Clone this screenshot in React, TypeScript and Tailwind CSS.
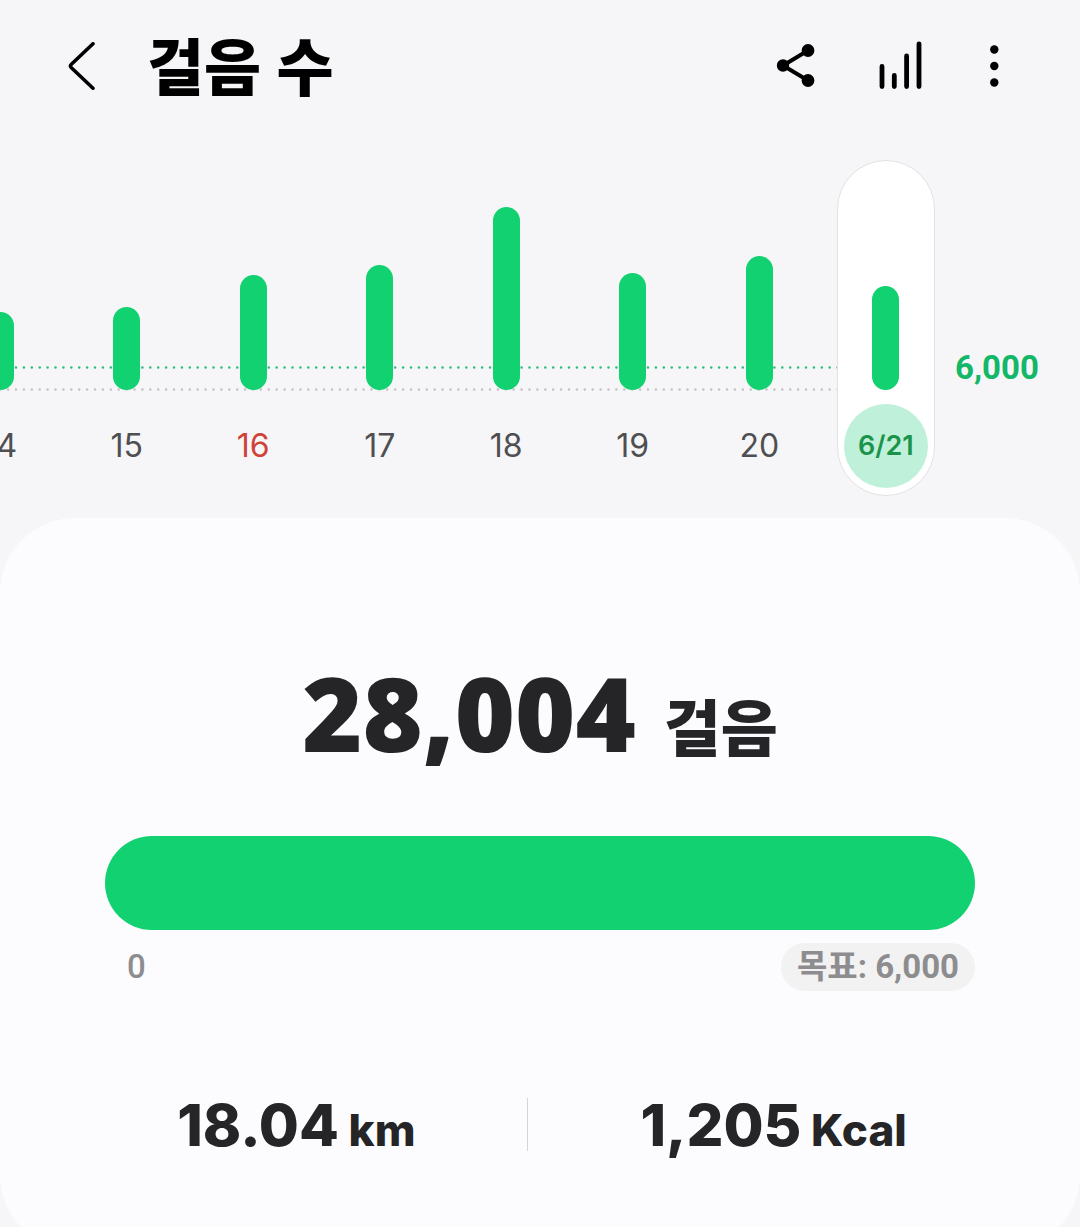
import React from 'react';

interface Day {
  label: string;
  height: number;
  holiday?: boolean;
  selected?: boolean;
}

const days: Day[] = [
  { label: '14', height: 78 },
  { label: '15', height: 83 },
  { label: '16', height: 115, holiday: true },
  { label: '17', height: 125 },
  { label: '18', height: 183 },
  { label: '19', height: 117 },
  { label: '20', height: 134 },
  { label: '6/21', height: 104, selected: true },
];

const Header: React.FC = () => (
  <header className="flex h-[132px] items-center pl-[58px] pr-[62px]">
    <button type="button" aria-label="뒤로" className="size-12 shrink-0">
      <svg viewBox="0 0 48 48" className="size-12" fill="none" stroke="#000" strokeWidth="3.6" strokeLinecap="round" strokeLinejoin="round">
        <path d="M35 1.8 13.4 22.2Q11.6 24 13.4 25.8L35 46.2" />
      </svg>
    </button>
    <h1 className="ml-[41px] flex-1 pt-2 text-[62px] leading-[72px] font-black text-black">걸음 수</h1>
    <div className="flex items-center">
      <button type="button" aria-label="공유" className="size-12">
        <svg viewBox="0 0 48 48" className="size-12" stroke="#000" strokeWidth="4">
          <path d="M36 8.5 11 23.5 36 38.5" fill="none" />
          <circle cx="36" cy="8.5" r="4.4" />
          <circle cx="11" cy="23.5" r="4.2" />
          <circle cx="36" cy="38.5" r="4.4" />
        </svg>
      </button>
      <button type="button" aria-label="통계" className="ml-14 size-12">
        <svg viewBox="0 0 48 48" className="size-12 overflow-visible" fill="none" stroke="#000" strokeWidth="4.8" strokeLinecap="round">
          <path d="M6 24.4v20.2M18.3 33.4v11.2M30.6 14v30.6M43 1.8v42.8" />
        </svg>
      </button>
      <button type="button" aria-label="더보기" className="ml-[46px] size-12">
        <svg viewBox="0 0 48 48" className="size-12">
          <circle cx="24.3" cy="7.5" r="4.2" />
          <circle cx="24.3" cy="24" r="4.2" />
          <circle cx="24.3" cy="40.5" r="4.2" />
        </svg>
      </button>
    </div>
  </header>
);

const DayColumn: React.FC<{ day: Day }> = ({ day }) => (
  <button
    type="button"
    aria-pressed={Boolean(day.selected)}
    className={`relative flex h-[336px] w-[98px] flex-col items-center justify-end rounded-full border pb-[7px] ${
      day.selected ? 'border-[#e2e2e4] bg-white' : 'border-transparent'
    }`}
  >
    <span className="w-[27px] rounded-full bg-[#12d170]" style={{ height: day.height }} />
    <span
      className={`mt-3.5 flex size-21 items-center justify-center rounded-full font-['Inter',sans-serif] ${
        day.selected
          ? 'bg-[#bff0d9] text-[27px] font-semibold text-[#1b934b]'
          : day.holiday
            ? 'text-[32px] text-[#cf4339]'
            : 'text-[32px] text-[#4f4f51]'
      }`}
    >
      {day.label}
    </span>
  </button>
);

const StepsChart: React.FC = () => (
  <section className="mt-7 flex overflow-hidden">
    <div className="relative -ml-[63px] grid flex-1 grid-cols-8 justify-items-center">
      <svg className="absolute inset-0 h-full w-full" fill="none" strokeWidth="2.6" strokeLinecap="round" strokeDasharray="0 7.9">
        <line x1="0" y1="207.5" x2="93%" y2="207.5" stroke="#2fbd7c" />
        <line x1="0" y1="229.5" x2="93%" y2="229.5" stroke="#c3c3c5" />
      </svg>
      {days.map((day) => (
        <DayColumn key={day.label} day={day} />
      ))}
    </div>
    <div className="w-[131px] shrink-0 pt-[188px] pl-1.5 text-[33px] leading-10 font-bold text-[#12b768]">6,000</div>
  </section>
);

const App: React.FC = () => (
  <main
    lang="ko"
    className="h-screen overflow-y-auto bg-[#f6f6f8] font-['Roboto','Noto_Sans_CJK_KR',sans-serif] [scrollbar-width:none]"
  >
    <Header />
    <StepsChart />

    <section className="mt-[22px] rounded-[75px] bg-[#fcfcfe] px-[105px] pt-[122px] pb-[84px] text-[#252527]">
      <h2 className="flex h-[164px] items-baseline justify-center gap-7 leading-[144px] font-black">
        <span className="font-['Noto_Sans',sans-serif] text-[103px]">28,004</span>
        <span className="text-[62px]">걸음</span>
      </h2>

      <div
        role="progressbar"
        aria-label="걸음"
        aria-valuemin={0}
        aria-valuemax={6000}
        aria-valuenow={6000}
        className="mt-8 h-[94px] rounded-full bg-[#12d170]"
      />
      <div className="mt-[13px] flex items-center justify-between text-[33px] leading-12 text-[#8d8d8f]">
        <span className="pl-[22px] font-medium">0</span>
        <span className="rounded-full bg-[#f2f2f3] px-4 font-bold">목표: 6,000</span>
      </div>

      <div className="mt-[92px] flex items-center justify-center gap-28 pl-1 font-['Inter',sans-serif] font-extrabold">
        <p className="pt-1.5 text-[58px] leading-[72px]">
          18.04<span className="text-[44px]"> km</span>
        </p>
        <div className="h-[53px] w-px bg-[#d5d5d7]" />
        <p className="pt-1.5 text-[58px] leading-[72px]">
          1,205<span className="text-[44px]"> Kcal</span>
        </p>
      </div>
    </section>
  </main>
);

export default App;
